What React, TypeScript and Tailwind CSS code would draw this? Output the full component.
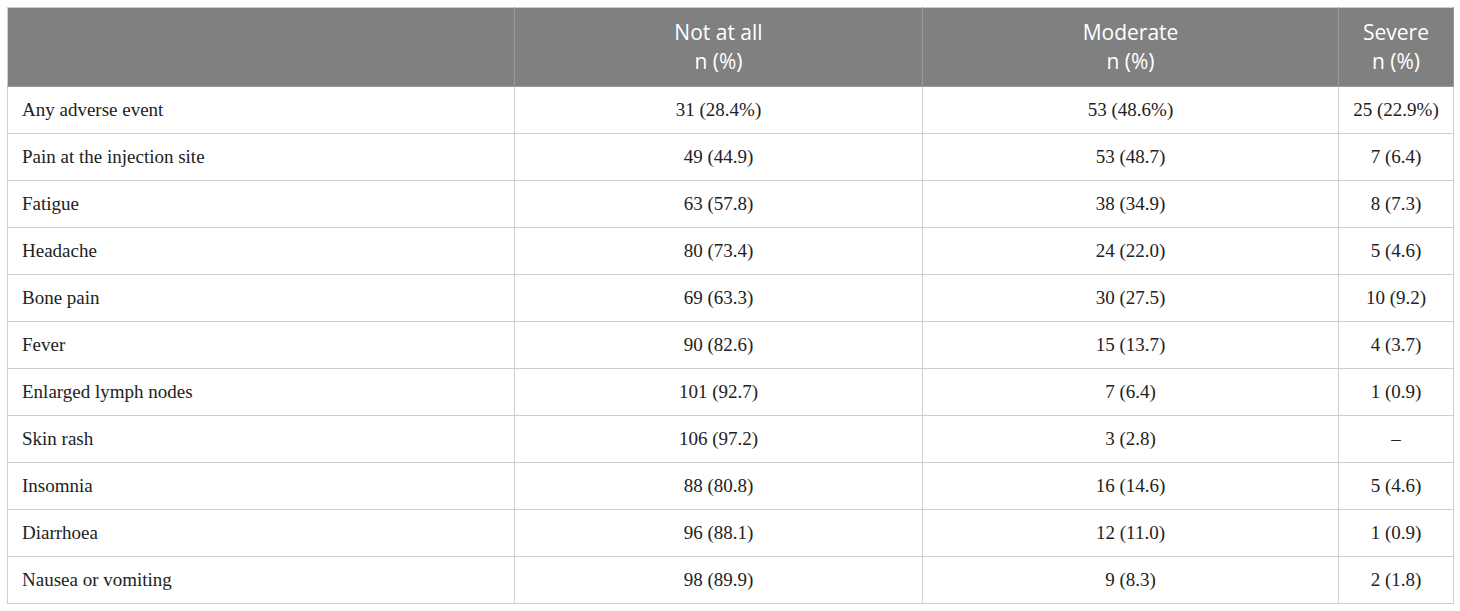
const rows: [string, string, string, string][] = [
  ["Any adverse event", "31 (28.4%)", "53 (48.6%)", "25 (22.9%)"],
  ["Pain at the injection site", "49 (44.9)", "53 (48.7)", "7 (6.4)"],
  ["Fatigue", "63 (57.8)", "38 (34.9)", "8 (7.3)"],
  ["Headache", "80 (73.4)", "24 (22.0)", "5 (4.6)"],
  ["Bone pain", "69 (63.3)", "30 (27.5)", "10 (9.2)"],
  ["Fever", "90 (82.6)", "15 (13.7)", "4 (3.7)"],
  ["Enlarged lymph nodes", "101 (92.7)", "7 (6.4)", "1 (0.9)"],
  ["Skin rash", "106 (97.2)", "3 (2.8)", "–"],
  ["Insomnia", "88 (80.8)", "16 (14.6)", "5 (4.6)"],
  ["Diarrhoea", "96 (88.1)", "12 (11.0)", "1 (0.9)"],
  ["Nausea or vomiting", "98 (89.9)", "9 (8.3)", "2 (1.8)"],
]

const headers = ["Not at all", "Moderate", "Severe"]

export default function App() {
  return (
    <div className="bg-white p-[7px]">
      <table className="w-[1446px] table-fixed border-collapse border border-[#cfcfcf]">
        <colgroup>
          <col className="w-[507px]" />
          <col className="w-[408px]" />
          <col className="w-[416px]" />
          <col className="w-[115px]" />
        </colgroup>
        <thead>
          <tr className="h-[79px] bg-[#808080] text-white font-['Open_Sans',sans-serif] text-[21px] leading-[29px]">
            <th className="border border-[#9a9a9a] border-t-[#cfcfcf] border-l-[#cfcfcf]"></th>
            {headers.map((h) => (
              <th key={h} className="border border-[#9a9a9a] border-t-[#cfcfcf] font-normal text-center">
                {h}
                <br />
                n (%)
              </th>
            ))}
          </tr>
        </thead>
        <tbody className="font-['Liberation_Serif',serif] text-[19px] text-[#222]">
          {rows.map((r) => (
            <tr key={r[0]} className="h-[47px]">
              <td className="border border-[#cfcfcf] pl-[14px]">{r[0]}</td>
              <td className="border border-[#cfcfcf] text-center">{r[1]}</td>
              <td className="border border-[#cfcfcf] text-center">{r[2]}</td>
              <td className="border border-[#cfcfcf] text-center">{r[3]}</td>
            </tr>
          ))}
        </tbody>
      </table>
    </div>
  )
}
